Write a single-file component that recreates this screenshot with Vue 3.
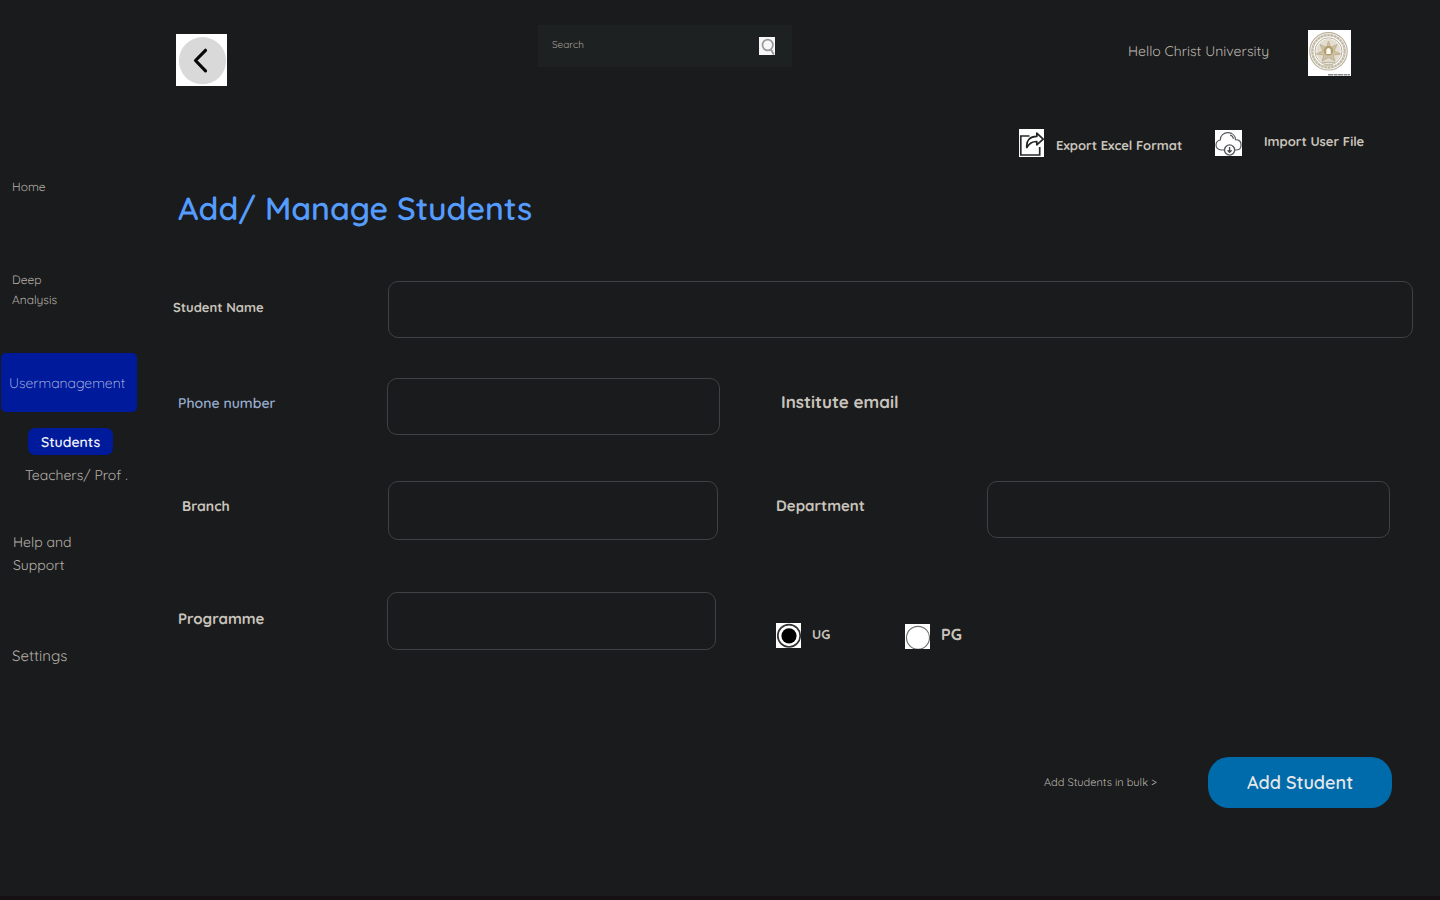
<script setup>
import { reactive } from 'vue'

const student = reactive({ name: '', phone: '', branch: '', department: '', programme: '' })
</script>

<template>
  <div class="page">
    <nav class="sidebar">
      <a class="t t-home">Home</a>
      <a class="t t-deep">Deep</a>
      <a class="t t-analysis">Analysis</a>
      <div class="group"><span class="t">Usermanagement</span></div>
      <div class="chip"><span class="t">Students</span></div>
      <a class="t t-teachers">Teachers/ Prof .</a>
      <a class="t t-help">Help and</a>
      <a class="t t-support">Support</a>
      <a class="t t-settings">Settings</a>
    </nav>
    <main class="main">
      <header class="header">
        <button class="back" aria-label="Back">
          <svg width="51" height="52" viewBox="0 0 51 52"><rect width="51" height="52" fill="#fff" /><circle cx="26.5" cy="26.7" r="23.6" fill="#d9d9d9" /><path d="M29.5 16.3 19.5 26.5l10 10.3" fill="none" stroke="#080808" stroke-width="3.2" stroke-linecap="round" stroke-linejoin="round" /></svg>
        </button>
        <div class="search">
          <span class="t t-search">Search</span>
          <svg width="16" height="18" viewBox="0 0 16 18"><rect width="16" height="18" fill="#f7f7f7" /><ellipse cx="8.7" cy="8" rx="5.2" ry="5.4" fill="none" stroke="#999" stroke-width="1.7" /><path d="m11.8 12.3 3 5.2" stroke="#999" stroke-width="1.8" /></svg>
        </div>
        <span class="t t-hello">Hello Christ University</span>
        <svg class="crest" width="43" height="46" viewBox="0 0 43 46">
          <rect width="43" height="46" fill="#fff" />
          <g fill="none" stroke="#b9af98">
            <circle cx="20.5" cy="21.3" r="18.7" stroke-width="1.1" />
            <circle cx="20.5" cy="21.3" r="16.2" stroke="#dad5c8" stroke-width="2.6" />
            <circle cx="20.5" cy="21.3" r="16.2" stroke="#bdb5a1" stroke-width="1.8" stroke-dasharray="2 1.4" />
            <circle cx="20.5" cy="21.3" r="13.5" stroke-width="1" />
            <circle cx="20.5" cy="21.3" r="8.2" stroke="#e3ddcf" stroke-width="8" />
            <path d="m20.5 11 2 6.500 6.500-3-3 6.500 6.500 3-7.500 1 2 6-6.500-3.500-6.500 3.500 2-6-7.500-1 6.500-3-3-6.500 6.500 3z" fill="#cdc2a9" stroke="#c0b292" stroke-width="1" />
          </g>
          <circle cx="20.5" cy="20.8" r="4.8" fill="#b39c6c" />
          <path d="M18.3 24v-4.2q2.2-3.500 4.400 0V24z" fill="#fffdf3" />
          <path d="M13 32.500h15M16 35h9" stroke="#c5bba4" stroke-width="1.5" />
          <path d="M20 44.700h22" stroke="#8a8a8a" stroke-width="1.4" stroke-dasharray="5 .6 4 .4" />
        </svg>
      </header>

      <div class="actions">
        <svg class="i-export" width="25" height="28" viewBox="0 0 25 28"><rect width="25" height="28" fill="#fff" /><path d="M10.500 7H1.800v19h18.900V18" fill="none" stroke="#252a2a" stroke-width="1.700" /><path d="M7.800 18.500c-.8-7 3.200-11.200 10-11.100V4.200l6.400 6-6.400 5.600v-3.300c-4.500-.1-7.400 1.400-10 6z" fill="#fff" stroke="#202424" stroke-width="1.700" stroke-linejoin="round" /></svg>
        <span class="t t-export">Export Excel Format</span>
        <svg class="i-import" width="27" height="26" viewBox="0 0 27 26"><rect width="27" height="26" fill="#fff" /><path d="M9 20H6.500C2.700 20 1 17.500 1 15c0-2.700 1.800-4.500 4.300-5C5.200 5.500 8.700 2.700 13 2.700c4.200 0 7.300 2.800 7.500 7 3.500.1 5.600 2.200 5.600 5.200 0 3.200-2.200 5.100-5.300 5.100H20M15 5c2 .5 3.200 1.800 3.400 3.700" fill="none" stroke="#555a5c" stroke-width="1.200" /><circle cx="14.600" cy="20" r="5.100" fill="#fff" stroke="#555a5c" stroke-width="1.400" /><path d="M14.600 17v5m-2-1.800 2 2.100 2-2.100" fill="none" stroke="#45494b" stroke-width="1.300" /></svg>
        <span class="t t-import">Import User File</span>
      </div>

      <h1 class="t t-title">Add/ Manage Students</h1>

      <form class="form" @submit.prevent>
        <div class="row r1"><label class="t t-sname">Student Name</label><input v-model="student.name" class="f-name" /></div>
        <div class="row r2"><label class="t t-phone">Phone number</label><input v-model="student.phone" class="f-phone" /><label class="t t-inst">Institute email</label></div>
        <div class="row r3"><label class="t t-branch">Branch</label><input v-model="student.branch" class="f-branch" /><label class="t t-dept">Department</label><input v-model="student.department" class="f-dept" /></div>
        <div class="row r4">
          <label class="t t-prog">Programme</label><input v-model="student.programme" class="f-prog" />
          <svg class="i-ug" width="25" height="25" viewBox="0 0 25 25"><rect width="25" height="25" fill="#fff" /><circle cx="13" cy="12.800" r="11.200" fill="none" stroke="#333" stroke-width="1.700" /><circle cx="13" cy="12.800" r="7.600" fill="#000" /></svg>
          <span class="t t-ug">UG</span>
          <svg class="i-pg" width="25" height="25" viewBox="0 0 25 25"><rect width="25" height="25" fill="#fff" /><circle cx="13" cy="13.800" r="11.500" fill="none" stroke="#707070" stroke-width="1.200" /></svg>
          <span class="t t-pg">PG</span>
        </div>
        <div class="footer"><a class="t t-bulk">Add Students in bulk &gt;</a><button class="submit"><span class="t">Add Student</span></button></div>
      </form>
    </main>
  </div>
</template>

<style>
html, body { margin: 0; background: #1a1b1d; }
</style>

<style scoped>
.page { box-sizing: border-box; width: 1440px; height: 900px; overflow: hidden; display: flex; background: #1a1b1d; border-bottom: 4px solid #160f14; font-family: Quicksand, Lato, "Noto Sans", sans-serif; color: #c9c4bb; text-rendering: geometricPrecision; }
.t { display: block; flex: none; line-height: 20px; white-space: nowrap; margin: 0; }
button { padding: 0; border: 0; font: inherit; color: inherit; }
svg { display: block; flex: none; }
.sidebar { width: 137px; flex: none; display: flex; flex-direction: column; align-items: flex-start; color: #b5b0a7; }
.t-home { font-size: 12px; margin: 177px 0 0 12px; }
.t-deep { font-size: 12px; margin: 73px 0 0 12px; }
.t-analysis { font-size: 12px; margin-left: 12px; }
.group { box-sizing: border-box; width: 136px; height: 59px; margin: 43px 0 0 1px; padding: 20px 0 0 8px; border-radius: 5px; background: #001a9c; color: #c3cae8; font-weight: 300; font-size: 14px; }
.chip { box-sizing: border-box; width: 85px; height: 27px; margin: 16px 0 0 28px; padding: 4px 0 0 13px; border-radius: 7px; background: #001a9c; color: #f1f2f8; font-weight: 600; font-size: 14px; }
.t-teachers { font-size: 14px; margin: 10px 0 0 25px; }
.t-help { font-size: 14px; margin: 47px 0 0 13px; }
.t-support { font-size: 14px; margin: 3px 0 0 13px; }
.t-settings { font-size: 15px; margin: 71px 0 0 12px; }
.main { flex: 1; min-width: 0; }
.header { height: 100px; display: flex; align-items: flex-start; }
.back { margin: 34px 0 0 39px; background: none; }
.search { box-sizing: border-box; width: 254px; height: 42px; margin: 25px 0 0 311px; padding: 12px 17px 0 14px; display: flex; justify-content: space-between; background: #1e2122; }
.t-search { font-size: 10px; line-height: 16px; color: #a8a39b; }
.t-hello { width: 141px; margin: 41px 0 0 336px; font-size: 14px; font-weight: 400; color: #bbb6ad; }
.crest { margin: 30px 0 0 39px; }
.actions { height: 70px; display: flex; align-items: flex-start; font-size: 13px; font-weight: 700; }
.i-export { margin: 29px 0 0 882px; }
.t-export { width: 126px; margin: 36px 0 0 12px; }
.i-import { margin: 30px 0 0 33px; }
.t-import { margin: 32px 0 0 22px; }
.t-title { height: 111px; padding: 18px 0 0 41px; box-sizing: border-box; font-size: 32px; line-height: 40px; font-weight: 600; color: #559cff; }
.row { display: flex; align-items: flex-start; }
.r1 { height: 97px; }
.r2 { height: 103px; }
.r3 { height: 111px; }
.r4 { height: 165px; }
input { box-sizing: border-box; flex: none; height: 57px; padding: 0 14px; border: 1px solid #3f4144; border-radius: 10px; background: transparent; color: inherit; font: inherit; outline: none; }
.t-sname { width: 215px; margin: 17px 0 0 36px; font-size: 13px; font-weight: 700; }
.f-name { width: 1025px; }
.t-phone { width: 209px; margin: 15px 0 0 41px; font-size: 14px; font-weight: 600; color: #98acce; }
.f-phone { width: 333px; }
.t-inst { margin: 15px 0 0 61px; font-size: 17px; font-weight: 700; }
.t-branch { width: 206px; margin: 15px 0 0 45px; font-size: 14px; font-weight: 700; }
.f-branch { width: 330px; height: 59px; }
.t-dept { width: 211px; margin: 15px 0 0 58px; font-size: 15px; font-weight: 700; }
.f-dept { width: 403px; }
.t-prog { width: 209px; margin: 17px 0 0 41px; font-size: 15px; font-weight: 700; }
.f-prog { width: 329px; height: 58px; }
.i-ug { margin: 31px 0 0 60px; }
.t-ug { width: 93px; margin: 33px 0 0 11px; font-size: 13px; font-weight: 700; }
.i-pg { margin-top: 32px; }
.t-pg { margin: 32px 0 0 11px; font-size: 16px; font-weight: 700; }
.footer { display: flex; align-items: flex-start; }
.t-bulk { width: 113px; margin: 15px 0 0 907px; font-size: 11px; font-weight: 400; color: #bbb6ad; }
.submit { width: 184px; height: 51px; margin-left: 51px; padding-left: 39px; border-radius: 21px; background: #006bab; color: #e5e7e8; font-size: 18px; font-weight: 600; text-align: left; }
</style>
